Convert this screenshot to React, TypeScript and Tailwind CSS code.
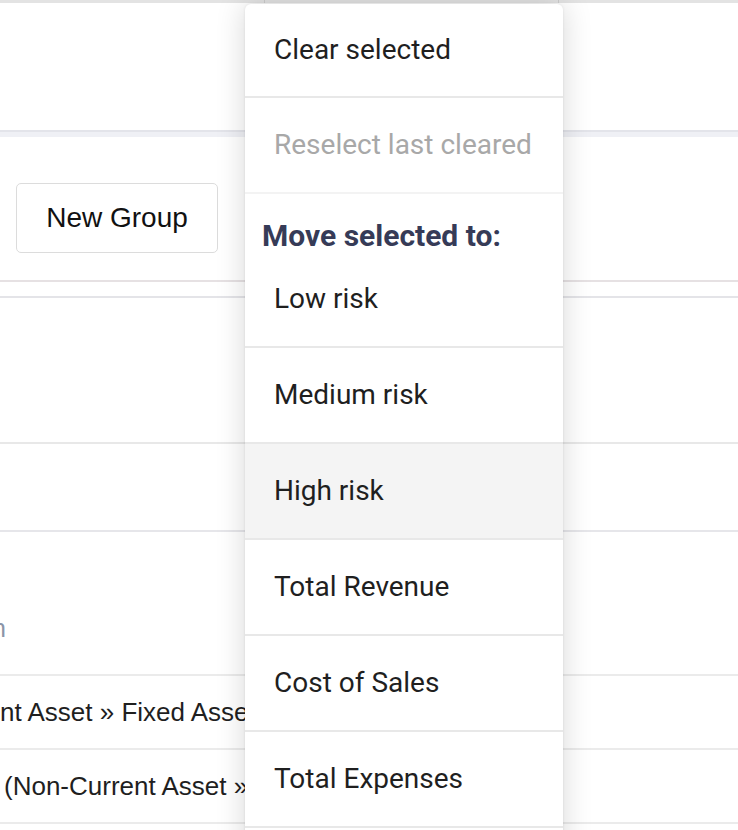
const menuItems = [
  "Low risk",
  "Medium risk",
  "High risk",
  "Total Revenue",
  "Cost of Sales",
  "Total Expenses",
];

function MoveMenu() {
  return (
    <div className="absolute left-[245px] top-[4px] w-[318px] overflow-hidden rounded-t-[6px] bg-white shadow-[0_0_30px_rgba(0,0,0,0.16),0_0_3px_rgba(0,0,0,0.08)] font-['Roboto',sans-serif] text-[28px]">
      <div className="flex h-[94px] items-center border-b-2 border-[#e8e8e8] pl-[29px] text-[#1f1f1f]">
        Clear selected
      </div>
      <div className="flex h-[96px] items-center border-b-2 border-[#f3f3f3] pl-[29px] text-[#a8a8a8]">
        Reselect last cleared
      </div>
      <div className="h-[58px] pl-[17px] pt-[26px] text-[30px] font-bold leading-[32px] text-[#363b57]">
        Move selected to:
      </div>
      {menuItems.map((label) => (
        <div
          key={label}
          className={
            label === "High risk"
              ? "flex h-[96px] items-center border-b-2 border-[#e8e8e8] bg-[#f4f4f4] pl-[29px] text-[#1f1f1f]"
              : "flex h-[96px] items-center border-b-2 border-[#e8e8e8] pl-[29px] text-[#1f1f1f]"
          }
        >
          {label}
        </div>
      ))}
      {/* menu keeps going below the fold */}
      <div className="h-[40px]" />
    </div>
  );
}

export default function App() {
  return (
    <div className="relative h-[830px] w-[738px] overflow-hidden bg-white font-['Liberation_Sans',Arial,sans-serif] text-[#1f1f1f]">
      <div className="flex h-[3px] bg-[#e3e3e3]">
        <div className="w-[265px] border-r border-[#cdcdcd]" />
        <div className="w-[294px] border-r border-[#cdcdcd]" />
      </div>
      <div className="h-[127px]" />
      <div className="h-[7px] border-t-2 border-[#e3e4ea] bg-[#eff0f5]" />
      <div className="h-[143px] pl-[16px] pt-[46px]">
        <button className="h-[70px] w-[202px] rounded-[5px] border border-[#dcdcdc] bg-white text-[28px] text-[#111]">
          New Group
        </button>
      </div>
      <div className="h-[16px] border-t-2 border-[#e6e1e3]" />
      <div className="h-[146px] border-t-2 border-[#e4e4e8]" />
      <div className="h-[88px] border-t-2 border-[#e8e8e8]" />
      <div className="flex h-[144px] items-end border-t-2 border-[#e6e6ea] pb-[27px] text-[25px] text-[#8b95a8]">
        <span className="ml-[-8px]">n</span>
      </div>
      <div className="h-[74px] border-t-2 border-[#ebebeb]">
        <div className="flex h-full w-[245px] items-center overflow-hidden whitespace-nowrap text-[26px]">
          nt Asset » Fixed Assets
        </div>
      </div>
      <div className="h-[74px] border-t-2 border-[#ebebeb]">
        <div className="flex h-full w-[245px] items-center overflow-hidden whitespace-nowrap pl-[4px] text-[26px]">
          (Non-Current Asset » Fixed Assets)
        </div>
      </div>
      <div className="h-[20px] border-t-2 border-[#ebebeb]" />
      <MoveMenu />
    </div>
  );
}
